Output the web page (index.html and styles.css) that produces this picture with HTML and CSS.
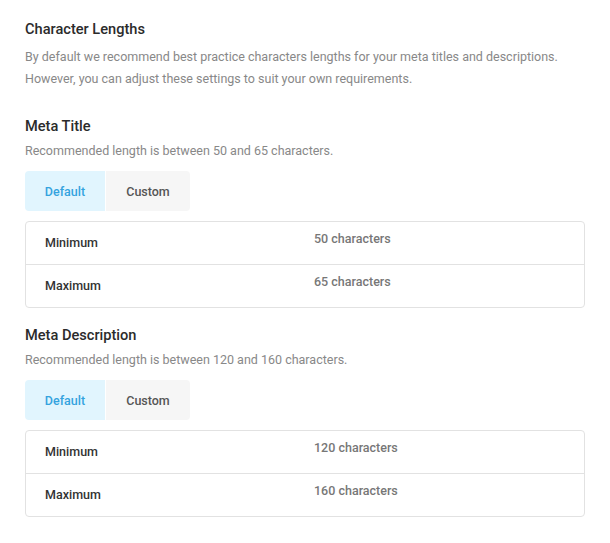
FILE: index.html
```html
<!DOCTYPE html>
<html lang="en">
<head>
<meta charset="UTF-8">
<meta name="viewport" content="width=device-width, initial-scale=1.0">
<title>Character Lengths</title>
<link rel="stylesheet" href="styles.css">
</head>
<body>
  <div class="container">
    <div class="intro">
      <h2 class="title">Character Lengths</h2>
      <p class="desc">By default we recommend best practice characters lengths for your meta titles and descriptions.<br>However, you can adjust these settings to suit your own requirements.</p>
    </div>

    <div class="section">
      <h3 class="section-title">Meta Title</h3>
      <p class="hint">Recommended length is between 50 and 65 characters.</p>
      <div class="tabs">
        <button class="tab active">Default</button>
        <button class="tab">Custom</button>
      </div>
      <div class="limits">
        <div class="row">
          <div class="label">Minimum</div>
          <div class="value">50 characters</div>
        </div>
        <div class="row">
          <div class="label">Maximum</div>
          <div class="value">65 characters</div>
        </div>
      </div>
    </div>

    <div class="section">
      <h3 class="section-title">Meta Description</h3>
      <p class="hint">Recommended length is between 120 and 160 characters.</p>
      <div class="tabs">
        <button class="tab active">Default</button>
        <button class="tab">Custom</button>
      </div>
      <div class="limits">
        <div class="row">
          <div class="label">Minimum</div>
          <div class="value">120 characters</div>
        </div>
        <div class="row">
          <div class="label">Maximum</div>
          <div class="value">160 characters</div>
        </div>
      </div>
    </div>
  </div>
</body>
</html>
```

FILE: styles.css
```css
body {
  font-family: 'Roboto', 'Liberation Sans', sans-serif;
  margin: 0;
  padding: 0;
  background: #fff;
  color: #333;
}
.container {
  padding: 20px 25px;
}
.title {
  font-size: 14.6px;
  font-weight: 500;
  color: #2b2b2b;
  margin: 0 0 8px;
  line-height: 18px;
}
.desc {
  font-size: 12.5px;
  line-height: 22px;
  color: #888;
  margin: 0 0 27px;
}
.section {
  margin-bottom: 18px;
}
.section-title {
  font-size: 14.6px;
  font-weight: 500;
  color: #2b2b2b;
  margin: 0 0 8px;
  line-height: 18px;
}
.hint {
  font-size: 12.5px;
  color: #888;
  margin: 0 0 12px;
  line-height: 16px;
}
.tabs {
  display: flex;
  gap: 1px;
  margin-bottom: 10px;
}
.tab {
  height: 40px;
  border: none;
  background-color: #f6f6f6;
  color: #555;
  font-family: inherit;
  font-size: 12.5px;
  font-weight: 500;
  cursor: pointer;
  padding: 0;
}
.tab:first-child {
  width: 80px;
  border-radius: 4px 0 0 4px;
}
.tab:last-child {
  width: 84px;
  border-radius: 0 4px 4px 0;
}
.tab.active {
  background-color: #e1f5fe;
  color: #34a3de;
}
.limits {
  border: 1px solid #e2e2e2;
  border-radius: 4px;
}
.row {
  display: flex;
  height: 42px;
}
.row + .row {
  border-top: 1px solid #e2e2e2;
}
.label {
  width: 269px;
  padding: 13px 0 0 19px;
  font-size: 12.5px;
  font-weight: 500;
  color: #333;
}
.value {
  padding: 9px 0 0 0;
  font-size: 12.5px;
  font-weight: 500;
  color: #777;
}
```
